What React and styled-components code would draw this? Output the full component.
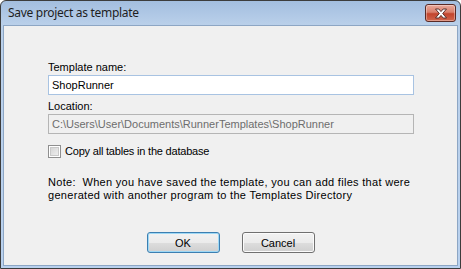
import styled, { createGlobalStyle } from "styled-components";

const Global = createGlobalStyle`
  html, body {
    margin: 0;
    padding: 0;
    background: #ffffff;
  }
`;

const Window = styled.div`
  box-sizing: border-box;
  width: 461px;
  height: 269px;
  display: flex;
  flex-direction: column;
  border: 1px solid #3c3c3c;
  border-radius: 6px 6px 0 0;
  background: linear-gradient(to bottom, #a3bedf 0px, #bad0ea 24px, #b9d1ee 100%);
  padding: 0 2px 2px 2px;
  overflow: hidden;
`;

const TitleBar = styled.div`
  height: 24px;
  display: flex;
  align-items: flex-start;
  padding-left: 5px;
`;

const Title = styled.span`
  font-family: "Noto Sans", "Open Sans", sans-serif;
  font-size: 12px;
  letter-spacing: -0.3px;
  line-height: 24px;
  color: #1e1e1e;
  flex: 1;
`;

const CloseButton = styled.div`
  box-sizing: border-box;
  width: 31px;
  height: 18px;
  margin-top: 3px;
  margin-right: 2px;
  border: 1px solid #5a2a25;
  border-radius: 3px;
  background: linear-gradient(to bottom, #e9a99b 0%, #d9806c 45%, #c2442c 55%, #d1664d 100%);
  box-shadow: inset 0 0 0 1px rgba(255, 255, 255, 0.35);
  display: flex;
  align-items: center;
  justify-content: center;
`;

const Client = styled.div`
  flex: 1;
  box-sizing: border-box;
  background: #f0f0f0;
  border: 1px solid #8da6c4;
  padding: 35px 0 0 44px;
  display: flex;
  flex-direction: column;
  font-family: "Liberation Sans", Arial, sans-serif;
  font-size: 11px;
  color: #000;
`;

const Label = styled.div`
  line-height: 13px;
`;

const TextBox = styled.div`
  box-sizing: border-box;
  width: 366px;
  height: 20px;
  margin-top: 1px;
  margin-bottom: ${(p) => p.$gap}px;
  padding-left: 3px;
  display: flex;
  align-items: center;
  border: 1px solid ${(p) => (p.$disabled ? "#b5b5b5" : "#a8c3e2")};
  background: ${(p) => (p.$disabled ? "#f0f0f0" : "#ffffff")};
  color: ${(p) => (p.$disabled ? "#6d6d6d" : "#000")};
  line-height: 13px;
`;

const CheckRow = styled.label`
  display: flex;
  align-items: center;
  gap: 4px;
  margin-top: 11px;
  line-height: 13px;
  letter-spacing: -0.2px;
`;

const Box = styled.span`
  box-sizing: border-box;
  width: 13px;
  height: 13px;
  border: 1px solid #8f8f8f;
  box-shadow: inset 0 0 0 1px #ffffff, inset 0 0 0 2px #c9c9c9;
  background-image: linear-gradient(135deg, #cfcfcf 0%, #f5f5f5 100%);
`;

const Note = styled.p`
  margin: 18px 0 0 0;
  width: 380px;
  line-height: 13px;
  letter-spacing: 0.3px;
`;

const ButtonRow = styled.div`
  margin-top: auto;
  margin-left: -44px;
  padding-bottom: 12px;
  display: flex;
  justify-content: center;
  gap: 22px;
`;

const Button = styled.button`
  box-sizing: border-box;
  width: 73px;
  height: 21px;
  padding: 0;
  border-radius: 3px;
  border: 1px solid ${(p) => (p.$default ? "#3c7fb1" : "#707070")};
  background: linear-gradient(to bottom, #f2f2f2 0%, #ebebeb 50%, #dddddd 51%, #cfcfcf 100%);
  box-shadow: inset 0 0 0 1px ${(p) => (p.$default ? "#9ed8f5" : "#fbfbfb")};
  font-family: "Liberation Sans", Arial, sans-serif;
  font-size: 11px;
  color: #000;
`;

const CloseIcon = () => (
  <svg width="14" height="11" viewBox="0 0 14 11">
    <path
      d="M1.5 1 L4.8 1 L7 3.6 L9.2 1 L12.5 1 L8.7 5.5 L12.5 10 L9.2 10 L7 7.4 L4.8 10 L1.5 10 L5.3 5.5 Z"
      fill="#ffffff"
      stroke="#4a2420"
      strokeWidth="0.9"
      strokeLinejoin="round"
    />
  </svg>
);

export default function App() {
  return (
    <>
      <Global />
      <Window>
        <TitleBar>
          <Title>Save project as template</Title>
          <CloseButton>
            <CloseIcon />
          </CloseButton>
        </TitleBar>
        <Client>
          <Label>Template name:</Label>
          <TextBox $gap={5}>ShopRunner</TextBox>
          <Label>Location:</Label>
          <TextBox $disabled $gap={0}>
            C:\Users\User\Documents\RunnerTemplates\ShopRunner
          </TextBox>
          <CheckRow>
            <Box />
            <span>Copy all tables in the database</span>
          </CheckRow>
          <Note>
            Note:&nbsp; When you have saved the template, you can add files that were generated with another
            program to the Templates Directory
          </Note>
          <ButtonRow>
            <Button $default>OK</Button>
            <Button>Cancel</Button>
          </ButtonRow>
        </Client>
      </Window>
    </>
  );
}
